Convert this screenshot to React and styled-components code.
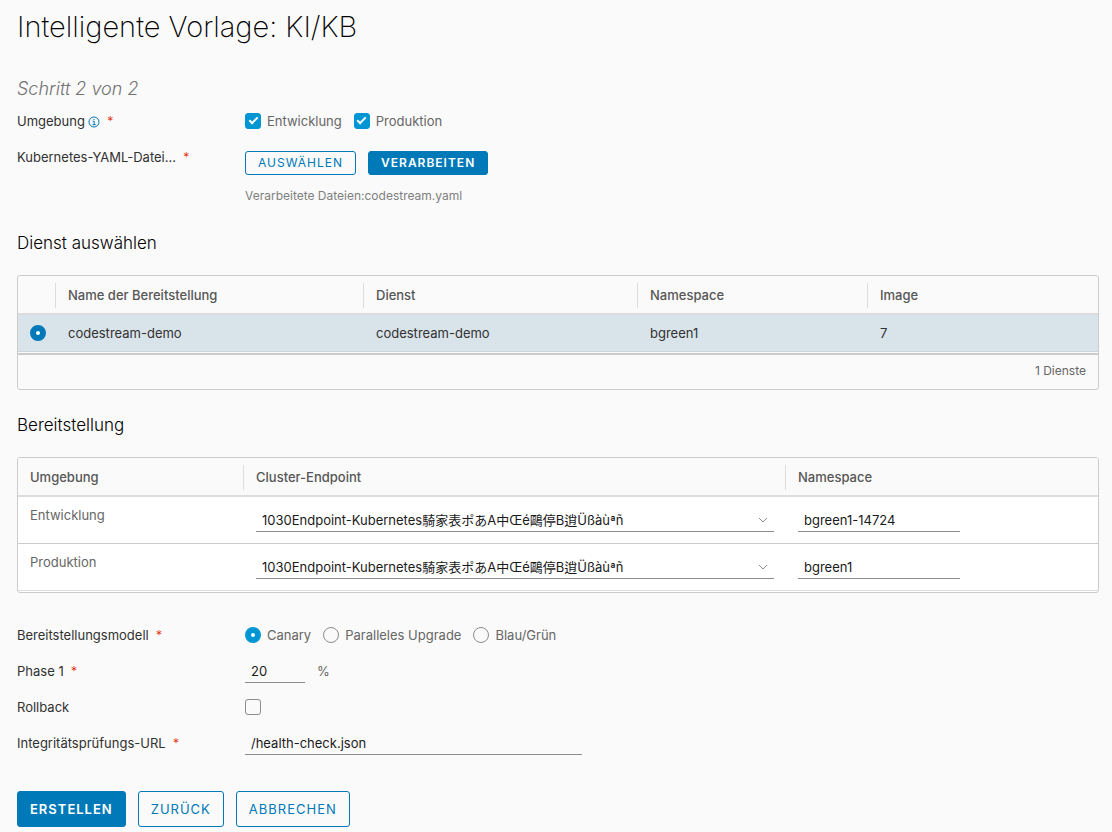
import React, { useState } from "react";
import styled, { createGlobalStyle, css } from "styled-components";

const GlobalStyle = createGlobalStyle`
    *, *::before, *::after {
        box-sizing : border-box;
    }
    body {
        margin : 0;
        background-color : #fafafa;
        color : #666;
        font-family : Inter, "Noto Sans CJK JP", "Noto Sans CJK SC", sans-serif;
        font-size : 13px;
        line-height : 24px;
    }
    button, input, select {
        font : inherit;
    }
`

const Page = styled.main`
    padding : 11px 13px 5px 17px;
`

const Title = styled.h1`
    margin : 0;
    font-size : 29px;
    line-height : 32px;
    font-weight : 200;
    color : #000;
`

const Step = styled.p`
    margin : 34px 0 8px;
    font-size : 18px;
    font-style : italic;
    font-weight : 300;
    color : #737373;
`

const SectionTitle = styled.h2`
    margin : 23px 0 20px;
    font-size : 17px;
    line-height : 24px;
    font-weight : 300;
    color : #000;
`

const FormRow = styled.div`
    display : grid;
    grid-template-columns : 228px 1fr;
    min-height : 36px;
    align-items : start;
`

const LabelCell = styled.div`
    display : flex;
    align-items : center;
    color : #313131;
`

const InfoIcon = styled.svg`
    width : 12px;
    height : 12px;
    margin : 2px 0 0 3px;
    color : #0079b8;
`

const Required = styled.span`
    margin-left : 7px;
    font-weight : 300;
    color : #e12200;
`

const Controls = styled.div`
    display : flex;
    align-items : center;
    gap : 12px;
    min-height : 24px;
`

const FileControls = styled.div`
    padding-top : 6px;
`

const FileInfo = styled.div`
    margin-top : 9px;
    font-size : 12px;
    color : #808080;
`

const Choice = styled.label`
    display : flex;
    align-items : center;
    gap : 6px;
`

const Checkbox = styled.input.attrs({ type: "checkbox" })`
    appearance : none;
    display : grid;
    justify-content : center;
    width : 16px;
    height : 16px;
    margin : 0;
    border : 1px solid #8c8c8c;
    border-radius : 3px;

    &:checked {
        border-color : #0095d3;
        background-color : #0095d3;
    }
    &:checked::after {
        content : "";
        width : 5px;
        height : 9px;
        margin-top : 1px;
        border : solid #fff;
        border-width : 0 2px 2px 0;
        transform : rotate(45deg);
    }
`

const Radio = styled.input.attrs({ type: "radio" })`
    appearance : none;
    display : block;
    width : 16px;
    height : 16px;
    margin : 0;
    border : 1px solid #8c8c8c;
    border-radius : 50%;

    &:checked {
        border : 6px solid ${props => props.$dark ? "#0079b8" : "#0095d3"};
        background-color : #fff;
    }
`

const Button = styled.button`
    height : ${props => props.$small ? "24px" : "36px"};
    padding : 0 12px;
    border : 1px solid #0079b8;
    border-radius : 3px;
    background-color : transparent;
    color : #0079b8;
    font-size : ${props => props.$small ? "12px" : "13px"};
    line-height : 22px;
    letter-spacing : 1px;
    text-transform : uppercase;
    cursor : pointer;

    ${props => props.$primary && css`
        background-color : #0079b8;
        color : #fff;
        font-weight : 600;
    `}
`

const underlined = css`
    display : block;
    height : 24px;
    padding : 0 6px;
    border : 0;
    border-bottom : 1px solid #8c8c8c;
    border-radius : 0;
    background-color : transparent;
    color : #1a1a1a;
    outline : none;
`

const TextInput = styled.input.attrs({ type: "text" })`
    ${underlined}
    width : ${props => props.$width || "162px"};
    max-width : 100%;
`

const SelectWrap = styled.div`
    position : relative;
`

const Select = styled.select`
    ${underlined}
    appearance : none;
    width : 100%;
    padding-right : 24px;
`

const Chevron = styled.svg`
    position : absolute;
    top : 7px;
    right : 6px;
    width : 10px;
    height : 10px;
    color : #8c8c8c;
    pointer-events : none;
`

const Panel = styled.div`
    border : 1px solid #ccc;
    border-radius : 3px;
    overflow : hidden;
`

const Table = styled.table`
    width : 100%;
    table-layout : fixed;
    border-spacing : 0;
    text-align : left;
`

const Th = styled.th`
    height : 39px;
    padding : 7px 0 5px;
    border-bottom : 2px solid #ddd;
    font-weight : 500;
    vertical-align : top;
    color : #565656;
`

const HeadLabel = styled.div`
    height : 25px;
    padding : 0 12px;
    border-right : ${props => props.$last ? "0" : "1px solid #ddd"};
`

const ServiceCell = styled.td`
    height : 37px;
    padding : 0 12px;
    border-bottom : 1px solid #ccd6db;
    background-color : #d9e4ea;
    color : #313131;
`

const TableFooter = styled.div`
    margin-top : 1px;
    padding : 4px 12px 6px;
    border-top : 2px solid #ccc;
    font-size : 12px;
    text-align : right;
`

const EnvCell = styled.td`
    height : 47px;
    padding : ${props => props.$field ? "11px 12px" : "6px 12px"};
    border-bottom : 1px solid ${props => props.$last ? "#ddd" : "#ccc"};
    background-color : #fff;
    vertical-align : top;
`

const EnvPanel = styled(Panel)`
    padding-bottom : 1px;
    margin-bottom : 30px;
    background-color : #fff;

    th {
        background-color : #fafafa;
    }
`

const Actions = styled.div`
    display : flex;
    gap : 12px;
    margin-top : 24px;
`

const ENDPOINT = "1030Endpoint-Kubernetes騎家表ポあA中Œé鷗停B逍Üßàùªñ";

const MODELS = ["Canary", "Paralleles Upgrade", "Blau/Grün"];

const Head = ({ labels }) => (
    <thead>
        <tr>
            {labels.map((label, i) => (
                <Th key={i} scope="col">
                    <HeadLabel $last={i === labels.length - 1}>{label}</HeadLabel>
                </Th>
            ))}
        </tr>
    </thead>
)

const Columns = ({ widths }) => (
    <colgroup>
        {widths.map((width, i) => <col key={i} width={width} />)}
    </colgroup>
)

const Field = ({ label, id, htmlFor, info, required, children }) => (
    <FormRow>
        <LabelCell>
            {htmlFor ? <label htmlFor={htmlFor}>{label}</label> : <span id={id}>{label}</span>}
            {info && (
                <InfoIcon viewBox="0 0 12 12" fill="none" stroke="currentColor" aria-hidden="true">
                    <circle cx="6" cy="6" r="5" />
                    <path d="M4.6 5.2H6.2V8.6M4.4 8.7H7.8" />
                    <path d="M5.4 3.4H6.6" />
                </InfoIcon>
            )}
            {required && <Required>*</Required>}
        </LabelCell>
        {children}
    </FormRow>
)

export default () => {
    const [envs, setEnvs] = useState({ Entwicklung: true, Produktion: true });
    const [namespaces, setNamespaces] = useState({ Entwicklung: "bgreen1-14724", Produktion: "bgreen1" });
    const [model, setModel] = useState("Canary");
    const [phase, setPhase] = useState("20");
    const [rollback, setRollback] = useState(false);
    const [healthUrl, setHealthUrl] = useState("/health-check.json");

    const names = Object.keys(envs);

    return (
        <Page>
            <GlobalStyle />
            <Title>Intelligente Vorlage: KI/KB</Title>
            <Step>Schritt 2 von 2</Step>

            <Field label="Umgebung" id="env-label" info required>
                <Controls role="group" aria-labelledby="env-label">
                    {names.map(name => (
                        <Choice key={name}>
                            <Checkbox
                                checked={envs[name]}
                                onChange={(e) => setEnvs({ ...envs, [name]: e.target.checked })}
                            />
                            {name}
                        </Choice>
                    ))}
                </Controls>
            </Field>
            <Field label="Kubernetes-YAML-Datei..." id="yaml-label" required>
                <FileControls role="group" aria-labelledby="yaml-label">
                    <Controls>
                        <Button type="button" $small>Auswählen</Button>
                        <Button type="button" $small $primary>Verarbeiten</Button>
                    </Controls>
                    <FileInfo>Verarbeitete Dateien:codestream.yaml</FileInfo>
                </FileControls>
            </Field>

            <SectionTitle>Dienst auswählen</SectionTitle>
            <Panel>
                <Table>
                    <Columns widths={[38, 308, 274, 230, 230]} />
                    <Head labels={["", "Name der Bereitstellung", "Dienst", "Namespace", "Image"]} />
                    <tbody>
                        <tr>
                            <ServiceCell>
                                <Radio $dark name="service" aria-label="codestream-demo" defaultChecked />
                            </ServiceCell>
                            <ServiceCell>codestream-demo</ServiceCell>
                            <ServiceCell>codestream-demo</ServiceCell>
                            <ServiceCell>bgreen1</ServiceCell>
                            <ServiceCell>7</ServiceCell>
                        </tr>
                    </tbody>
                </Table>
                <TableFooter>1 Dienste</TableFooter>
            </Panel>

            <SectionTitle>Bereitstellung</SectionTitle>
            <EnvPanel>
                <Table>
                    <Columns widths={[226, 542, 312]} />
                    <Head labels={["Umgebung", "Cluster-Endpoint", "Namespace"]} />
                    <tbody>
                        {names.map((name, i) => (
                            <tr key={name}>
                                <EnvCell $last={i === names.length - 1}>{name}</EnvCell>
                                <EnvCell $field $last={i === names.length - 1}>
                                    <SelectWrap>
                                        <Select aria-label={"Cluster-Endpoint " + name}>
                                            <option>{ENDPOINT}</option>
                                        </Select>
                                        <Chevron viewBox="0 0 10 10" fill="none" stroke="currentColor" aria-hidden="true">
                                            <path d="M1 3L5 7L9 3" />
                                        </Chevron>
                                    </SelectWrap>
                                </EnvCell>
                                <EnvCell $field $last={i === names.length - 1}>
                                    <TextInput
                                        aria-label={"Namespace " + name}
                                        value={namespaces[name]}
                                        onChange={(e) => setNamespaces({ ...namespaces, [name]: e.target.value })}
                                    />
                                </EnvCell>
                            </tr>
                        ))}
                    </tbody>
                </Table>
            </EnvPanel>

            <Field label="Bereitstellungsmodell" id="model-label" required>
                <Controls role="radiogroup" aria-labelledby="model-label">
                    {MODELS.map(name => (
                        <Choice key={name}>
                            <Radio
                                name="model"
                                checked={model === name}
                                onChange={() => setModel(name)}
                            />
                            {name}
                        </Choice>
                    ))}
                </Controls>
            </Field>
            <Field label="Phase 1" htmlFor="phase" required>
                <Controls>
                    <TextInput id="phase" $width="60px" value={phase} onChange={(e) => setPhase(e.target.value)} />
                    <span>%</span>
                </Controls>
            </Field>
            <Field label="Rollback" htmlFor="rollback">
                <Controls>
                    <Checkbox id="rollback" checked={rollback} onChange={(e) => setRollback(e.target.checked)} />
                </Controls>
            </Field>
            <Field label="Integritätsprüfungs-URL" htmlFor="health" required>
                <Controls>
                    <TextInput id="health" $width="337px" value={healthUrl} onChange={(e) => setHealthUrl(e.target.value)} />
                </Controls>
            </Field>

            <Actions>
                <Button type="button" $primary>Erstellen</Button>
                <Button type="button">Zurück</Button>
                <Button type="button">Abbrechen</Button>
            </Actions>
        </Page>
    )
};
